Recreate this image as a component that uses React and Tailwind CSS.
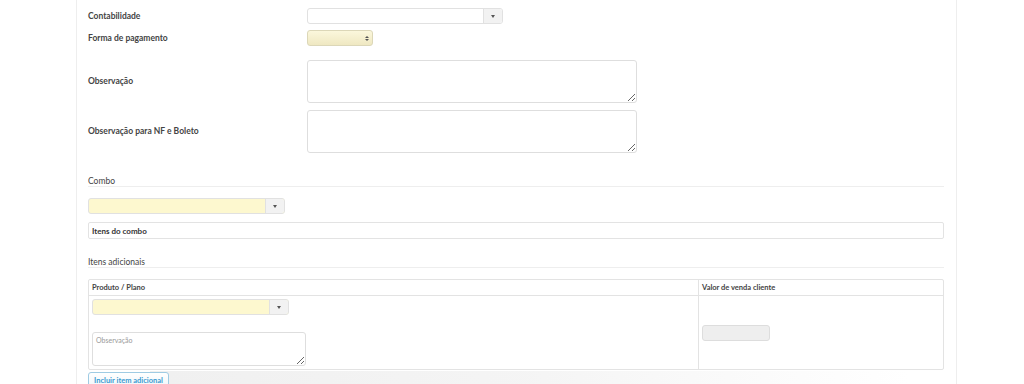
import { useState } from 'react';

function Select({ width, yellow, caret = true }) {
  return (
    <div className={`flex h-[16px] rounded-[3px] border border-[#e1e1e1] overflow-hidden ${yellow ? 'bg-[#fdf8cf]' : 'bg-white'}`} style={{ width }}>
      <div className="flex-1" />
      {caret && (
        <div className="w-[19px] bg-[#f2f2f2] border-l border-[#e1e1e1] flex items-center justify-center">
          <span className="block w-0 h-0 border-l-[2.5px] border-r-[2.5px] border-t-[3px] border-l-transparent border-r-transparent border-t-[#555]" />
        </div>
      )}
    </div>
  );
}

export default function App() {
  const [obs, setObs] = useState('');
  const [obsNf, setObsNf] = useState('');
  const [obsItem, setObsItem] = useState('');

  const labelClass = 'text-[8.5px] font-bold text-[#444] w-[219px] shrink-0';
  const areaClass = 'w-[330px] h-[43px] border border-[#dedede] rounded-[3px] bg-white outline-none text-[8px] p-1 block';

  return (
    <div className="h-[384px] overflow-hidden bg-white relative" style={{ fontFamily: 'Lato, "Noto Sans", sans-serif' }}>
      <div className="ml-[76px] w-[881px] h-full border-l border-r border-[#eeeeee] pl-[11px] pr-[12px]">
        <div className="flex items-center pt-[8px]">
          <div className={labelClass}>Contabilidade</div>
          <Select width={196} />
        </div>
        <div className="flex items-center mt-[6px]">
          <div className={labelClass}>Forma de pagamento</div>
          <div className="w-[66px] h-[16px] rounded-[3px] border border-[#dcd7b8] bg-gradient-to-b from-[#fbf7dc] to-[#efe8c2] flex items-center justify-end pr-[3px]">
            <span className="flex flex-col items-center gap-[1px]">
              <span className="block w-0 h-0 border-l-[2px] border-r-[2px] border-b-[2px] border-l-transparent border-r-transparent border-b-[#555]" />
              <span className="block w-0 h-0 border-l-[2px] border-r-[2px] border-t-[2px] border-l-transparent border-r-transparent border-t-[#555]" />
            </span>
          </div>
        </div>
        <div className="flex items-center mt-[14px]">
          <div className={labelClass}>Observação</div>
          <textarea value={obs} onChange={(e) => setObs(e.target.value)} className={areaClass} />
        </div>
        <div className="flex items-center mt-[7px]">
          <div className={labelClass}>Observação para NF e Boleto</div>
          <textarea value={obsNf} onChange={(e) => setObsNf(e.target.value)} className={areaClass} />
        </div>

        <div className="mt-[22px] border-b border-[#eeeeee] h-[12px] text-[8.5px] text-[#444] leading-[13px]">Combo</div>
        <div className="mt-[11px]">
          <Select width={197} yellow />
        </div>
        <div className="mt-[8px] h-[17px] border border-[#e3e3e3] rounded-[2px] flex items-center px-[3px] text-[8px] font-bold text-[#333]">
          Itens do combo
        </div>

        <div className="mt-[17px] border-b border-[#eeeeee] h-[12px] text-[8.5px] text-[#444] leading-[12px]">Itens adicionais</div>
        <div className="mt-[11px] border border-[#e3e3e3] rounded-[2px]">
          <div className="flex h-[16px] border-b border-[#e3e3e3] text-[7.5px] font-bold text-[#444]">
            <div className="w-[610px] px-[3px] flex items-center border-r border-[#e3e3e3]">Produto / Plano</div>
            <div className="flex-1 px-[3px] flex items-center">Valor de venda cliente</div>
          </div>
          <div className="flex h-[73px]">
            <div className="w-[610px] px-[3px] pt-[3px] border-r border-[#e3e3e3]">
              <Select width={197} yellow />
              <textarea
                value={obsItem}
                onChange={(e) => setObsItem(e.target.value)}
                placeholder="Observação"
                className="mt-[17px] w-[214px] h-[34px] border border-[#dedede] rounded-[3px] bg-white outline-none text-[7px] px-[3px] py-[2px] placeholder:text-[#999] block"
              />
            </div>
            <div className="flex-1 px-[3px] pt-[29px]">
              <div className="w-[68px] h-[16px] rounded-[3px] border border-[#dddddd] bg-[#eeeeee]" />
            </div>
          </div>
        </div>
        <button className="block mt-[2px] h-[18px] px-[5px] rounded-[3px] border border-[#9fcbe3] bg-gradient-to-b from-white to-[#eef5f9] text-[7.5px] text-[#3b9ad0] font-bold leading-[16px] relative z-10">
          Incluir item adicional
        </button>
      </div>
      <div className="absolute left-[150px] w-[760px] top-[371px] h-[13px] bg-gradient-to-r from-[#ececec] via-[#f2f2f2] to-transparent opacity-80 pointer-events-none" />
    </div>
  );
}
